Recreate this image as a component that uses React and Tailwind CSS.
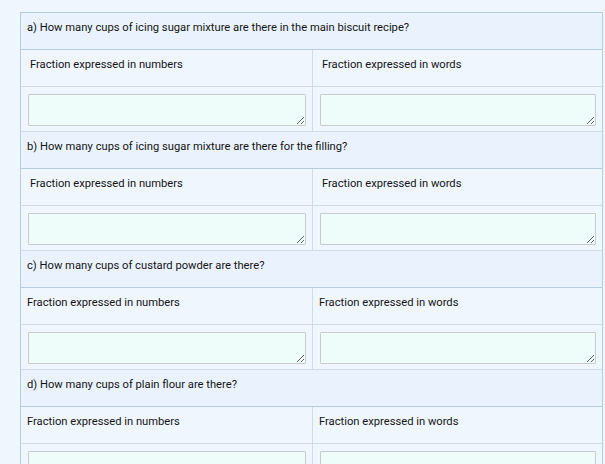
import React from 'react';

const questions = [
  { q: 'a) How many cups of icing sugar mixture are there in the main biscuit recipe?', pad: 'pl-[9px]' },
  { q: 'b) How many cups of icing sugar mixture are there for the filling?', pad: 'pl-[9px]' },
  { q: 'c) How many cups of custard powder are there?', pad: 'pl-[6px]' },
  { q: 'd) How many cups of plain flour are there?', pad: 'pl-[6px]' },
];

const Answer = () => (
  <textarea className="block w-full h-[32px] bg-[#eefdf9] border border-[#c9cccc] rounded-[1px] resize-y outline-none" />
);

const Section = ({ q, pad }) => (
  <div>
    <div className="h-[37px] pt-[8px] pl-[6px] bg-[#eaf3fd] border-b border-[#b6cce0] text-[11.2px] leading-[14px] text-[#141414]">
      {q}
    </div>
    <div className="grid grid-cols-[292px_1fr]">
      <div className={`h-[37px] pt-[8px] ${pad} border-r border-b border-[#cfdbe7] text-[11.2px] leading-[14px] text-[#141414]`}>
        Fraction expressed in numbers
      </div>
      <div className={`h-[37px] pt-[8px] ${pad} border-b border-[#cfdbe7] text-[11.2px] leading-[14px] text-[#141414]`}>
        Fraction expressed in words
      </div>
      <div className="h-[45px] pt-[7px] pl-[7px] pr-[6px] border-r border-b border-[#cfdbe7]">
        <Answer />
      </div>
      <div className="h-[45px] pt-[7px] pl-[7px] pr-[6px] border-b border-[#cfdbe7]">
        <Answer />
      </div>
    </div>
  </div>
);

export default function App() {
  return (
    <div className="min-h-screen bg-[#f0f6fe] pt-[12px] pl-[20px] overflow-hidden" style={{ fontFamily: 'Roboto, "Noto Sans", sans-serif' }}>
      <div className="w-[583px] border-t border-l border-r border-[#b6cce0] bg-[#eff6fe]">
        {questions.map((s) => (
          <Section key={s.q} {...s} />
        ))}
      </div>
    </div>
  );
}
